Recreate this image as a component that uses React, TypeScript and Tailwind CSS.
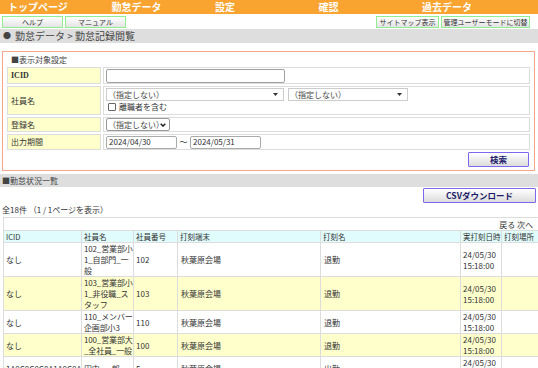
import React from 'react';

const NAV = ['トップページ', '勤怠データ', '設定', '確認', '過去データ'];

type Row = {
  icid: string;
  name: string;
  no: string;
  term: string;
  kind: string;
  date: string;
  time: string;
  place: string;
};

const ROWS: Row[] = [
  { icid: 'なし', name: '102_営業部小1_自部門_一般', no: '102', term: '秋葉原会場', kind: '退勤', date: '24/05/30', time: '15:18:00', place: '' },
  { icid: 'なし', name: '103_営業部小1_非役職_スタッフ', no: '103', term: '秋葉原会場', kind: '退勤', date: '24/05/30', time: '15:18:00', place: '' },
  { icid: 'なし', name: '110_メンバー企画部小3', no: '110', term: '秋葉原会場', kind: '退勤', date: '24/05/30', time: '15:18:00', place: '' },
  { icid: 'なし', name: '100_営業部大_全社員_一般', no: '100', term: '秋葉原会場', kind: '退勤', date: '24/05/30', time: '15:18:00', place: '' },
  { icid: '1A0C0C0C0A1A0C0A', name: '田中_一郎', no: '5', term: '秋葉原会場', kind: '出勤', date: '24/05/30', time: '09:02:00', place: '' },
  { icid: 'なし', name: '104_営業部小2_一般', no: '104', term: '秋葉原会場', kind: '出勤', date: '24/05/30', time: '09:00:00', place: '' },
];

const HEADERS = ['ICID', '社員名', '社員番号', '打刻端末', '打刻名', '実打刻日時', '打刻場所'];

const GreenButton: React.FC<{ className?: string; children: React.ReactNode }> = ({ className, children }) => (
  <div
    className={`flex h-[12px] items-center justify-center whitespace-nowrap border border-[#90ee90] bg-linear-to-b from-white to-[#e4e4e4] text-[7px] leading-none text-[#333] ${className ?? ''}`}
  >
    {children}
  </div>
);

const PurpleButton: React.FC<{ className?: string; children: React.ReactNode }> = ({ className, children }) => (
  <div
    className={`flex h-[15px] items-center justify-center rounded-[1px] border border-[#7b68ee] bg-linear-to-b from-white to-[#dcdcdc] text-[8.5px] font-bold leading-none text-[#1c1c6a] ${className ?? ''}`}
  >
    {children}
  </div>
);

const Arrow = () => (
  <svg width="5" height="3" viewBox="0 0 5 3" className="shrink-0">
    <polygon points="0,0 5,0 2.5,3" fill="#333" />
  </svg>
);

export default function App() {
  return (
    <div className="h-[368px] w-[538px] overflow-hidden bg-white font-['Noto_Sans_CJK_JP','Noto_Sans',sans-serif] text-[#333]">
      {/* global nav */}
      <div className="flex h-[14px] items-center bg-[#f9a431]">
        {NAV.map((n) => (
          <div key={n} className="w-[103.5px] shrink-0 pl-[8px] text-[10px] font-bold leading-none text-white">
            {n}
          </div>
        ))}
      </div>

      <div className="mt-[2px] flex pl-[2px] pr-[8px]">
        <GreenButton className="w-[61px]">ヘルプ</GreenButton>
        <GreenButton className="ml-[2px] w-[61px]">マニュアル</GreenButton>
        <GreenButton className="ml-auto w-[63px]">サイトマップ表示</GreenButton>
        <GreenButton className="ml-[2px] w-[89px]">管理ユーザーモードに切替</GreenButton>
      </div>

      <div className="mt-[1px] flex h-[14px] items-center bg-[#dedede] pl-[3px] text-[#444]">
        <span className="w-[12px] text-[8px] leading-none">●</span>
        <span className="text-[10px] leading-none">勤怠データ &gt; 勤怠記録閲覧</span>
      </div>

      {/* search conditions */}
      <div className="ml-[2px] mr-[3px] mt-[8px] border border-[#f6a58a] px-[2px] pb-[3px] pt-[2px]">
        <div className="pl-[6px] text-[8px] leading-[11px] text-[#444]">■表示対象設定</div>
        <table className="w-full border-separate border-spacing-[2px] text-[8px] leading-none">
          <tbody>
            <tr>
              <td className="h-[17px] w-[94px] border border-[#ddd] bg-[#ffffcc] pl-[3px] font-['Liberation_Serif',serif] font-bold text-[#333]">
                ICID
              </td>
              <td className="border border-[#ddd] pl-[2px]">
                <div className="h-[14px] w-[179px] rounded-[2px] border border-[#a0a0a0] bg-white" />
              </td>
            </tr>
            <tr>
              <td className="h-[29px] border border-[#ddd] bg-[#ffffcc] pl-[3px]">社員名</td>
              <td className="border border-[#ddd] pl-[2px] pt-[1px] align-top">
                <div className="flex">
                  <div className="flex h-[13px] w-[178px] items-center justify-between border border-[#ccc] pl-[1px] pr-[5px] text-[#444]">
                    <span>（指定しない）</span>
                    <Arrow />
                  </div>
                  <div className="ml-[4px] flex h-[13px] w-[120px] items-center justify-between border border-[#ccc] pl-[1px] pr-[5px] text-[#444]">
                    <span>（指定しない）</span>
                    <Arrow />
                  </div>
                </div>
                <div className="mt-[2px] flex items-center">
                  <div className="ml-[2px] h-[8px] w-[8px] rounded-[1px] border border-[#666] bg-white" />
                  <span className="ml-[3px]">離職者を含む</span>
                </div>
              </td>
            </tr>
            <tr>
              <td className="h-[15px] border border-[#ddd] bg-[#ffffcc] pl-[3px]">登録名</td>
              <td className="border border-[#ddd] pl-[2px]">
                <div className="flex h-[13px] w-[64px] items-center justify-between rounded-[2px] border border-[#999] pl-[1px] pr-[3px] text-[#444]">
                  <span>（指定しない）</span>
                  <svg width="6" height="4" viewBox="0 0 6 4" className="shrink-0">
                    <polyline points="0.7,0.7 3,3.1 5.3,0.7" fill="none" stroke="#222" strokeWidth="1.4" />
                  </svg>
                </div>
              </td>
            </tr>
            <tr>
              <td className="h-[16px] border border-[#ddd] bg-[#ffffcc] pl-[3px]">出力期間</td>
              <td className="border border-[#ddd] pl-[2px]">
                <div className="flex items-center">
                  <div className="flex h-[13px] w-[71px] items-center rounded-[2px] border border-[#aaa] pl-[2px]">2024/04/30</div>
                  <span className="w-[13px] text-center">～</span>
                  <div className="flex h-[13px] w-[71px] items-center rounded-[2px] border border-[#aaa] pl-[2px]">2024/05/31</div>
                </div>
              </td>
            </tr>
          </tbody>
        </table>
        <div className="flex justify-end pr-[3px]">
          <PurpleButton className="w-[61px]">検索</PurpleButton>
        </div>
      </div>

      {/* list */}
      <div className="mt-[3px] flex h-[13px] items-center bg-[#dedede] pl-[2px] text-[8px] leading-none text-[#444]">
        ■勤怠状況一覧
      </div>
      <div className="mt-[1px] flex justify-end pr-[2px]">
        <PurpleButton className="w-[113px]">CSVダウンロード</PurpleButton>
      </div>
      <div className="h-[13px] pl-[2px] text-[8px] leading-[13px]">全18件 （1 / 1ページを表示）</div>

      <table className="ml-[3px] mt-[1px] w-[536px] table-fixed border-collapse text-[8px] leading-[11px]">
        <colgroup>
          <col className="w-[78px]" />
          <col className="w-[52px]" />
          <col className="w-[44px]" />
          <col className="w-[143px]" />
          <col className="w-[140px]" />
          <col className="w-[41px]" />
          <col />
        </colgroup>
        <thead>
          <tr>
            <td colSpan={7} className="h-[13px] border border-[#ddd] pr-[5px] text-right">
              戻る 次へ
            </td>
          </tr>
          <tr className="bg-[#e0fcfc]">
            {HEADERS.map((h) => (
              <th key={h} className="h-[12px] overflow-hidden whitespace-nowrap border border-[#ddd] pl-[2px] text-left text-[7.5px] font-normal">
                {h}
              </th>
            ))}
          </tr>
        </thead>
        <tbody>
          {ROWS.map((r, i) => (
            <tr key={i} className={i % 2 === 1 ? 'bg-[#ffffcc]' : 'bg-white'}>
              <td className="overflow-hidden whitespace-nowrap border border-[#ddd] pl-[2px] align-middle">{r.icid}</td>
              <td className="border border-[#ddd] pl-[2px] pr-0 align-middle tracking-[-0.15px]">{r.name}</td>
              <td className="border border-[#ddd] pl-[2px] align-middle">{r.no}</td>
              <td className="border border-[#ddd] pl-[3px] align-middle">{r.term}</td>
              <td className="border border-[#ddd] pl-[3px] align-middle">{r.kind}</td>
              <td className="border border-[#ddd] pl-[2px] align-middle">
                <div>{r.date}</div>
                <div>{r.time}</div>
              </td>
              <td className="border border-[#ddd] pl-[2px] align-middle">{r.place}</td>
            </tr>
          ))}
        </tbody>
      </table>
    </div>
  );
}
